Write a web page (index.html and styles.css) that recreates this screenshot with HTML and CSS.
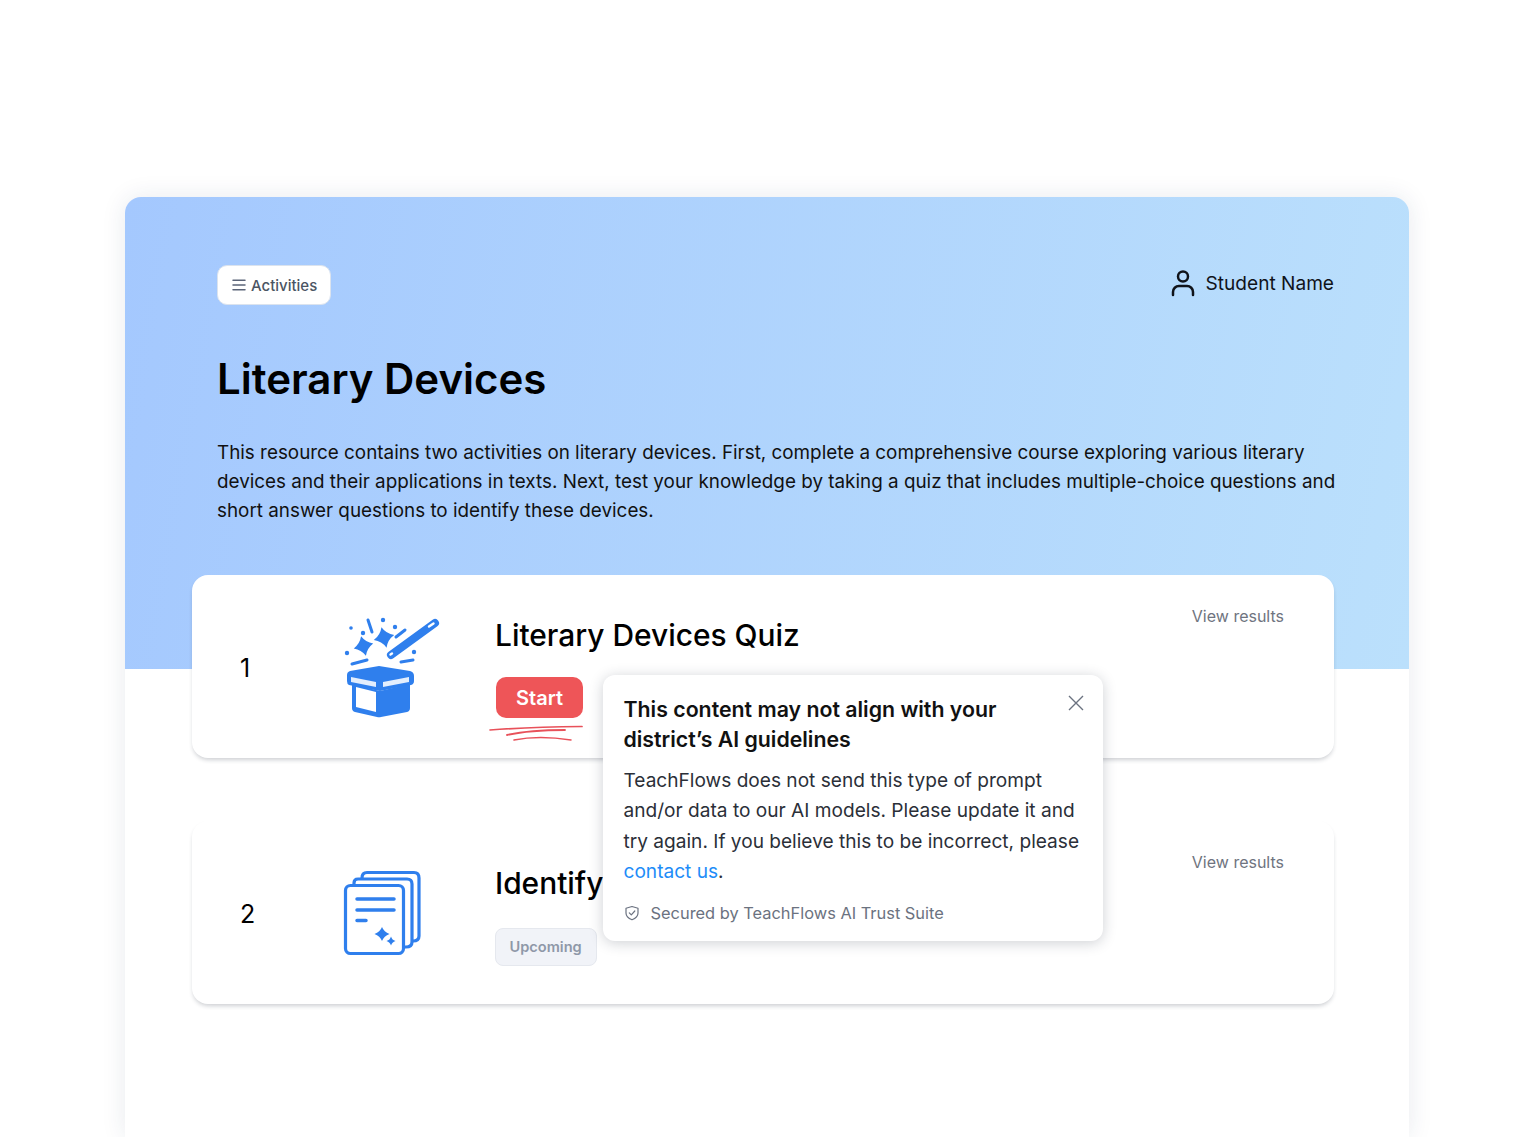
FILE: index.html
```html
<!DOCTYPE html>
<html lang="en">
<head>
  <meta charset="UTF-8">
  <title>Literary Devices</title>
  <link rel="stylesheet" href="styles.css">
</head>
<body>

  <div class="frame">
    <div class="hero">
      <div class="top-row">
        <button class="activities-btn">
          <svg class="menu-icon" width="14" height="12" viewBox="0 0 14 12"><path d="M1 1.200h12M1 6h12M1 10.800h12" stroke="#5b6478" stroke-width="1.500" stroke-linecap="round"/></svg>
          Activities
        </button>
        <div class="student">
          <svg width="24" height="28" viewBox="0 0 24 28" fill="none" stroke="#10131a" stroke-width="2.500" stroke-linecap="round"><circle cx="12" cy="7.500" r="5"/><path d="M2 26v-3a6 6 0 0 1 6-6h8a6 6 0 0 1 6 6v3"/></svg>
          Student Name
        </div>
      </div>
      <h1>Literary Devices</h1>
      <p class="intro">This resource contains two activities on literary devices. First, complete a comprehensive course exploring various literary devices and their applications in texts. Next, test your knowledge by taking a quiz that includes multiple-choice questions and short answer questions to identify these devices.</p>
    </div>

    <div class="cards">
      <div class="card">
        <div class="card-num">1</div>
        <svg class="card-icon" width="120" height="125" viewBox="0 0 120 125">
          <g fill="#2f7fed">
            <path d="M20 67L49 62L80 67Q84 68 84 72V77Q84 80 81 81L50 87L19 81Q17 80 17 77V71Q17 68 20 67Z"/>
            <path d="M22 80L50 87L80 80V104Q80 107 77 108L51 113Q49 113.500 47 113L25 108Q22 107 22 104Z"/>
            <path d="M33.500 32Q36.500 39 43.500 42Q36.500 45 33.500 52Q30.500 45 23.500 42Q30.500 39 33.500 32Z" transform="rotate(-14 33.500 42)"/>
            <path d="M54 23Q57 30.500 64.500 33.500Q57 36.500 54 44Q51 36.500 43.500 33.500Q51 30.500 54 23Z" transform="rotate(-14 54 33.500)"/>
            <circle cx="21" cy="24" r="1.800"/><circle cx="33" cy="29" r="2.200"/><circle cx="53" cy="16" r="2.200"/>
            <circle cx="65" cy="23" r="2.200"/><circle cx="17" cy="49" r="2.200"/><circle cx="84" cy="48" r="2.200"/>
          </g>
          <path d="M26 83L46 88V108L26 103Z" fill="#fff"/>
          <path d="M21 73L46 78V83L21 78Z" fill="#e3eefd"/>
          <path d="M53 78L79 73V78L53 83Z" fill="#e3eefd"/>
          <g stroke="#2f7fed" stroke-linecap="round" fill="none">
            <path d="M61 51L105 19" stroke-width="8"/>
            <path d="M38 16L42 28M66 33L75 26M22 60L37 56M71 58L83 56" stroke-width="3"/>
          </g>
          <path d="M60.500 50.500L62 49.500M99 22.500L103.500 19.500" stroke="#fff" stroke-width="2.400" stroke-linecap="round"/>
        </svg>
        <div class="card-body">
          <h2>Literary Devices Quiz</h2>
          <div class="start-wrap">
            <button class="start-btn">Start</button>
            <svg class="scribble" width="96" height="18" viewBox="0 0 96 18" fill="none" stroke="#e8515a" stroke-linecap="round">
              <path d="M1 5Q40 2 93 1.500" stroke-width="1.700"/>
              <path d="M18 10Q40 5 76 5" stroke-width="1.800"/>
              <path d="M25 15Q50 10 82 15" stroke-width="1.500"/>
            </svg>
          </div>
        </div>
        <a class="view-results">View results</a>
      </div>

      <div class="card">
        <div class="card-num">2</div>
        <svg class="card-icon" width="120" height="105" viewBox="0 0 120 105" fill="none" stroke="#2f7fed" stroke-width="3.200">
          <rect x="15.500" y="25.500" width="58" height="68" rx="5"/>
          <path d="M24 24V23Q24 19 28 19H77Q82 19 82 24V82Q82 87 76 87H74"/>
          <path d="M32 18Q32 12.500 37 12.500H84Q89 12.500 89 18V76Q89 81 83 81H82"/>
          <path d="M27 39H64M27 50H64M27 60.500H36" stroke-width="3.500" stroke-linecap="round"/>
          <g fill="#2f7fed" stroke="none">
            <path d="M52 67Q54 72 59.500 74Q54 76 52 81Q50 76 44.500 74Q50 72 52 67Z"/>
            <path d="M61 76.500Q62 80 65.500 81Q62 82 61 85.500Q60 82 56.500 81Q60 80 61 76.500Z"/>
          </g>
        </svg>
        <div class="card-body card-body-upcoming">
          <h2>Identify Literary Devices</h2>
          <span class="upcoming">Upcoming</span>
        </div>
        <a class="view-results">View results</a>
      </div>
    </div>

    <div class="popup">
      <button class="popup-close" aria-label="Close">
        <svg width="16" height="16" viewBox="0 0 16 16"><path d="M1 1l14 14M15 1L1 15" stroke="#6b7280" stroke-width="1.400"/></svg>
      </button>
      <h3>This content may not align with your district’s AI guidelines</h3>
      <p>TeachFlows does not send this type of prompt and/or data to our AI models. Please update it and try again. If you believe this to be incorrect, please <a href="#">contact us</a>.</p>
      <div class="secured">
        <svg width="16" height="16" viewBox="0 0 16 16" fill="none" stroke="#6b7280" stroke-width="1.200" stroke-linejoin="round" stroke-linecap="round"><path d="M8 1.500L14 3.300V8Q14 12.500 8 14.800Q2 12.500 2 8V3.300Z"/><path d="M5.300 7.800L7.300 9.800L10.800 6"/></svg>
        Secured by TeachFlows AI Trust Suite
      </div>
    </div>
  </div>

</body>
</html>
```

FILE: styles.css
```css
* {
  box-sizing: border-box;
}

body {
  margin: 0;
  height: 1137px;
  overflow: hidden;
  background: #fff;
  font-family: Inter, "Liberation Sans", sans-serif;
  color: #000;
}

.frame {
  position: relative;
  width: 1284px;
  height: 940px;
  margin: 197px 0 0 125px;
  border-radius: 16px 16px 0 0;
  background: #fff;
  box-shadow: 0 0 24px rgba(30, 50, 90, 0.1);
}

.hero {
  height: 472px;
  padding: 68px 75px 0 92px;
  border-radius: 16px 16px 0 0;
  background: linear-gradient(100deg, #a4c8fe 0%, #bbe0fc 100%);
}

.top-row {
  display: flex;
  justify-content: space-between;
  align-items: flex-start;
}

.activities-btn {
  display: flex;
  align-items: center;
  gap: 5px;
  width: 114px;
  height: 40px;
  padding: 0 0 0 14px;
  border: 1px solid #dbe3ee;
  border-radius: 10px;
  background: #fff;
  color: #4b5563;
  font-family: inherit;
  font-size: 15px;
  font-weight: 500;
}

.menu-icon {
  flex: none;
}

.student {
  display: flex;
  align-items: center;
  gap: 11px;
  height: 36px;
  font-size: 19.100px;
  color: #10131a;
}

h1 {
  margin: 45px 0 0;
  font-size: 42px;
  line-height: 58px;
  font-weight: 600;
}

.intro {
  margin: 30px -5px 0 0;
  font-size: 18.850px;
  line-height: 29px;
  color: #111;
}

.cards {
  position: relative;
  display: flex;
  flex-direction: column;
  gap: 63px;
  margin: -94px 75px 0 67px;
}

.card {
  display: flex;
  align-items: center;
  position: relative;
  height: 183px;
  border-radius: 16px;
  background: #fff;
  box-shadow: 0 3px 4px -1px rgba(30, 40, 60, 0.22);
}

.card-num {
  width: 138px;
  padding: 3px 0 0 48px;
  font-size: 25px;
}

.card-icon {
  flex: none;
  margin-right: 45px;
}

.card-body {
  display: flex;
  flex-direction: column;
  align-items: flex-start;
  gap: 22px;
}

.card-body-upcoming {
  gap: 25px;
  padding-top: 4px;
}

h2 {
  margin: 0;
  font-size: 29.900px;
  line-height: 40px;
  font-weight: 500;
}

.start-wrap {
  position: relative;
}

.start-btn {
  display: block;
  width: 87px;
  height: 41px;
  margin-left: 1px;
  border: 0;
  border-radius: 10px;
  background: #ee5558;
  color: #fff;
  font-family: inherit;
  font-size: 20px;
  font-weight: 600;
}

.scribble {
  position: absolute;
  left: -6px;
  top: 48px;
}

.upcoming {
  display: flex;
  align-items: center;
  height: 38px;
  padding: 0 14px 0 13.500px;
  border: 1px solid #e5e8ee;
  border-radius: 8px;
  background: #f1f3f8;
  color: #8f98a8;
  font-size: 14.600px;
  font-weight: 600;
}

.view-results {
  position: absolute;
  top: 31px;
  right: 50px;
  font-size: 16px;
  line-height: 20px;
  color: #6f7480;
}

.popup {
  position: absolute;
  left: 478px;
  top: 478px;
  width: 500px;
  height: 266px;
  padding: 19px 20px 0 20.500px;
  border-radius: 12px;
  background: #fff;
  box-shadow: 0 2px 14px rgba(30, 40, 60, 0.22);
}

.popup-close {
  position: absolute;
  top: 20px;
  right: 19px;
  padding: 0;
  border: 0;
  background: none;
  line-height: 0;
}

.popup h3 {
  margin: 0;
  width: 400px;
  font-size: 21.300px;
  line-height: 30px;
  font-weight: 600;
  color: #111;
}

.popup p {
  margin: 11px 0 0;
  font-size: 19.100px;
  line-height: 30.400px;
  color: #2b2f38;
}

.popup a {
  color: #1d8cf8;
  text-decoration: none;
}

.secured {
  display: flex;
  align-items: center;
  gap: 11px;
  margin-top: 16.500px;
  font-size: 16.400px;
  color: #6b7280;
}
```
